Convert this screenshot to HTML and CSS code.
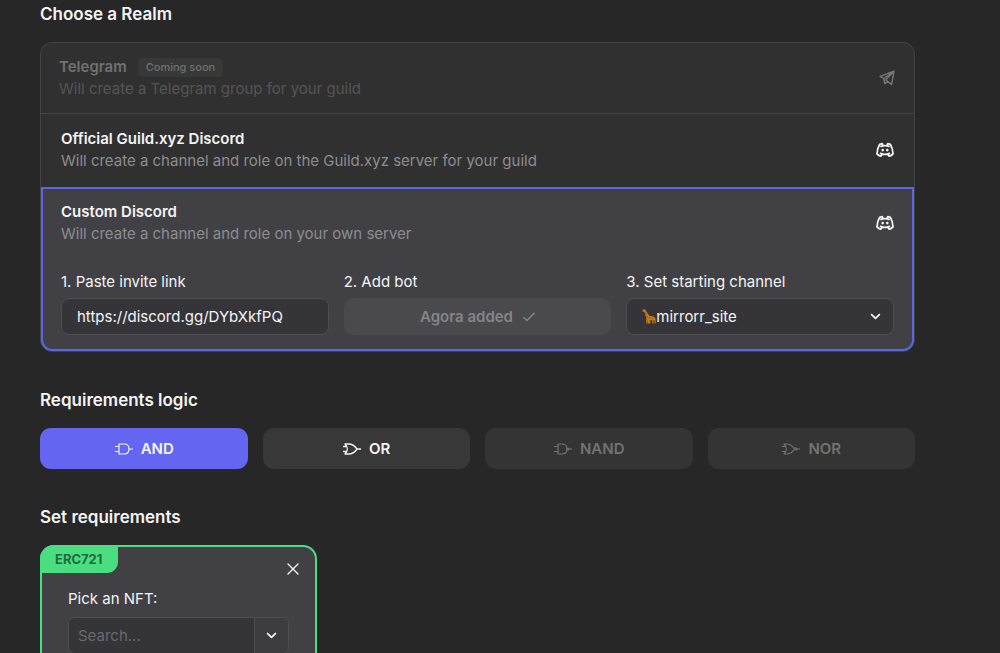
FILE: index.html
```html
<!DOCTYPE html>
<html lang="en">
<head>
<meta charset="utf-8">
<meta name="viewport" content="width=device-width, initial-scale=1">
<title>Create Guild</title>
<link rel="stylesheet" href="styles.css">
</head>
<body>
<svg class="sprite" aria-hidden="true">
  <symbol id="discord" viewBox="0 0 18 16">
    <path d="M6.800 3.400 6.200 1.600 3.600 2.400C2.200 4.500 1.200 7.500 1 11.800c1 1.200 2.300 2 3.800 2.400l1.500-2.300M11.200 3.400l.6-1.800 2.600.8c1.400 2.100 2.400 5.100 2.600 9.400-1 1.200-2.300 2-3.800 2.400l-1.500-2.300M5 4.400c2.600-1 5.400-1 8 0M4.600 11.400c2.800 1.200 6 1.200 8.800 0" fill="none" stroke="currentColor" stroke-width="1.800" stroke-linecap="round" stroke-linejoin="round"/>
    <circle cx="6.700" cy="8.100" r="1.300" fill="currentColor"/><circle cx="11.300" cy="8.100" r="1.300" fill="currentColor"/>
  </symbol>
  <symbol id="chevron" viewBox="0 0 10 10">
    <path d="M1.500 3.200 5 6.700l3.500-3.500" fill="none" stroke="currentColor" stroke-width="1.600" stroke-linecap="round" stroke-linejoin="round"/>
  </symbol>
</svg>
<main class="page">
  <section class="section">
    <h2 class="heading">Choose a Realm</h2>
    <div class="realms">
      <div class="realm realm-disabled">
        <input class="radio" type="radio" name="realm" id="telegram" disabled>
        <label class="realm-head" for="telegram">
          <span class="realm-text">
            <span class="realm-title">Telegram <span class="tag">Coming soon</span></span>
            <span class="realm-desc">Will create a Telegram group for your guild</span>
          </span>
          <svg class="plane" viewBox="0 0 16 16" aria-hidden="true"><path d="M15 1.200 1 6.300l3.700 2.200 1 5.200 2.700-2.500 4.200 3.200L15 1.200 4.700 8.500M15 1.200 6.800 9.700l1.600 1.500" fill="none" stroke="currentColor" stroke-width="1.400" stroke-linejoin="round"/></svg>
        </label>
      </div>
      <div class="realm">
        <input class="radio" type="radio" name="realm" id="official">
        <label class="realm-head" for="official">
          <span class="realm-text">
            <span class="realm-title">Official Guild.xyz Discord</span>
            <span class="realm-desc">Will create a channel and role on the Guild.xyz server for your guild</span>
          </span>
          <svg class="discord" aria-hidden="true"><use href="#discord"/></svg>
        </label>
      </div>
      <div class="realm realm-selected">
        <input class="radio" type="radio" name="realm" id="custom" checked>
        <label class="realm-head" for="custom">
          <span class="realm-text">
            <span class="realm-title">Custom Discord</span>
            <span class="realm-desc">Will create a channel and role on your own server</span>
          </span>
          <svg class="discord" aria-hidden="true"><use href="#discord"/></svg>
        </label>
        <div class="fields">
          <div class="field">
            <label class="label" for="invite">1. Paste invite link</label>
            <input class="control" id="invite" type="text" value="https://discord.gg/DYbXkfPQ">
          </div>
          <div class="field">
            <label class="label" for="bot">2. Add bot</label>
            <button class="bot" id="bot" type="button" disabled>Agora added
              <svg class="check" viewBox="0 0 12 10" aria-hidden="true"><path d="M.8 5.400 4 8.600 11.200 1.200" fill="none" stroke="currentColor" stroke-width="1.400" stroke-linecap="round" stroke-linejoin="round"/></svg>
            </button>
          </div>
          <div class="field">
            <label class="label" for="channel">3. Set starting channel</label>
            <div class="select-wrap">
              <select class="control select" id="channel"><option>mirrorr_site</option></select>
              <svg class="giraffe" viewBox="0 0 14 15" aria-hidden="true"><path d="M.3 1.500 1.800.200 3.400.6l1 2 3 4.200 4.300.8 1.800 1.800.3 5.100h-1.200l-.4-3.600-.9.300.3 3.300h-1.300l-.4-3.400-1.500-.1-.2 3.500H6l-.2-3.800-.4 3.800H4.100l.2-5.900L2.400 3 .5 2.600z" fill="#c27a1c"/><path d="M3 3.500 4.600 5.200M5 7.200l1.200 1M7.500 8.200l1 1M10 8.600l1 1" stroke="#714413" stroke-width=".7"/></svg>
              <svg class="chevron select-arrow" aria-hidden="true"><use href="#chevron"/></svg>
            </div>
          </div>
        </div>
      </div>
    </div>
  </section>

  <section class="section">
    <h2 class="heading">Requirements logic</h2>
    <div class="logic">
      <button class="gate gate-active" type="button">
        <svg class="gate-icon" viewBox="0 0 20 12" aria-hidden="true"><path d="M5 1h5c3 0 5 2 5 5s-2 5-5 5H5zM1 3.500h4M1 8.500h4M15 6h4"/></svg>AND
      </button>
      <button class="gate" type="button">
        <svg class="gate-icon gate-icon-bold" viewBox="0 0 20 12" aria-hidden="true"><path d="M3 1h3.500c4 0 6.500 2 8.500 5-2 3-4.500 5-8.500 5H3c3-3 3-7 0-10zM1 3.500h4M1 8.500h4M15 6h4"/></svg>OR
      </button>
      <button class="gate" type="button" disabled>
        <svg class="gate-icon" viewBox="0 0 20 12" aria-hidden="true"><path d="M5 1h4c3 0 5 2 5 5s-2 5-5 5H5zM1 3.500h4M1 8.500h4M16 6h3"/><circle cx="15" cy="6" r="1"/></svg>NAND
      </button>
      <button class="gate" type="button" disabled>
        <svg class="gate-icon" viewBox="0 0 20 12" aria-hidden="true"><path d="M3 1h3c3.500 0 5.500 2 7.500 5-2 3-4 5-7.500 5H3c3-3 3-7 0-10zM1 3.500h4M1 8.500h4M16 6h3"/><circle cx="14.700" cy="6" r="1.200"/></svg>NOR
      </button>
    </div>
  </section>

  <section class="section">
    <h2 class="heading">Set requirements</h2>
    <div class="requirements">
      <div class="card">
        <span class="badge">ERC721</span>
        <button class="close" type="button" aria-label="Remove"><svg class="close-icon" viewBox="0 0 12 12" aria-hidden="true"><path d="m1 1 10 10M11 1 1 11" fill="none" stroke="currentColor" stroke-width="1.400" stroke-linecap="round"/></svg></button>
        <label class="label" for="nft">Pick an NFT:</label>
        <div class="combo">
          <input class="combo-input" id="nft" type="text" placeholder="Search...">
          <button class="combo-button" type="button" aria-label="Show options"><svg class="chevron" aria-hidden="true"><use href="#chevron"/></svg></button>
        </div>
      </div>
    </div>
  </section>
</main>
</body>
</html>
```
FILE: styles.css
```css
* { box-sizing: border-box; }
html { background: #272727; scrollbar-width: none; }
body {
  margin: 0;
  color: #f4f4f5;
  font: 15px/22px Inter, "Liberation Sans", sans-serif;
}
button, input, select { font: inherit; color: inherit; margin: 0; }
.sprite { position: absolute; width: 0; height: 0; }
.page {
  display: flex;
  flex-direction: column;
  gap: 36px;
  padding: 2px 85px 0 40px;
}
.heading { margin: 0 0 16px; font-size: 17px; line-height: 24px; font-weight: 600; }

.realms {
  border: 1px solid #434344;
  border-radius: 12px;
  background: #303030;
}
.realm { position: relative; padding: 14px 20px 15px; }
.radio { position: absolute; opacity: 0; }
.realm-head { display: flex; align-items: center; justify-content: space-between; }
.realm-text { display: flex; flex-direction: column; }
.realm-title { display: flex; align-items: center; gap: 11px; font-weight: 600; }
.realm-desc { color: #8d8d90; }
.discord { width: 18px; height: 16px; }
.plane { width: 16px; height: 16px; color: #777; }
.realm-disabled { padding: 13px 19px 13px 18px; border-bottom: 1px solid #434344; }
.realm-disabled .realm-title { color: #707071; }
.realm-disabled .realm-desc { color: #555556; }
.tag {
  padding: 0 8px;
  border-radius: 5px;
  background: #383838;
  color: #707071;
  font-size: 11px;
  line-height: 19px;
  font-weight: 500;
}
.realm-selected {
  padding: 12px 18px 14px;
  border: 2px solid #5966e6;
  border-radius: 0 0 11px 11px;
  background: #404045;
}
.fields { display: grid; grid-template-columns: repeat(3, minmax(0, 1fr)); gap: 15px; margin-top: 26px; }
.field { display: flex; flex-direction: column; gap: 5px; }
.label { display: block; }
.control {
  width: 100%;
  height: 37px;
  padding: 0 15px;
  border: 1px solid #4d4d52;
  border-radius: 8px;
  background: #353439;
}
.bot {
  display: flex;
  align-items: center;
  justify-content: center;
  gap: 10px;
  height: 37px;
  border: 0;
  border-radius: 10px;
  background: #4a4a4e;
  color: #858589;
  font-weight: 600;
}
.check { width: 12px; height: 10px; }
.select-wrap { position: relative; }
.select { display: block; appearance: none; padding-left: 29px; }
.giraffe { position: absolute; left: 16px; top: 11px; width: 14px; height: 15px; pointer-events: none; }
.chevron { display: block; width: 11px; height: 11px; }
.select-arrow { position: absolute; right: 13px; top: 13px; pointer-events: none; }

.logic { display: grid; grid-template-columns: repeat(4, minmax(0, 1fr)); gap: 15px; }
.gate {
  display: flex;
  align-items: center;
  justify-content: center;
  gap: 7px;
  height: 41px;
  border: 0;
  border-radius: 11px;
  background: #383838;
  font-weight: 600;
}
.gate:disabled { background: #343434; color: #727272; }
.gate-active { background: #6466f1; }
.gate-icon { width: 20px; height: 12px; fill: none; stroke: currentColor; stroke-width: 1.2; stroke-linejoin: round; }
.gate-icon-bold { stroke-width: 1.4; }

.requirements { display: grid; grid-template-columns: repeat(3, minmax(0, 1fr)); gap: 22px; }
.card {
  position: relative;
  padding: 41px 26px 26px;
  border: 2px solid #4ade80;
  border-radius: 14px;
  background: #404045;
}
.badge {
  position: absolute;
  left: -2px;
  top: -2px;
  padding: 0 16px 0 15px;
  border-radius: 14px 0 11px 0;
  background: #4ade80;
  color: #216a40;
  font-size: 13px;
  line-height: 28px;
  font-weight: 700;
}
.close { position: absolute; top: 11px; right: 11px; padding: 5px; border: 0; background: none; }
.close-icon { display: block; width: 12px; height: 12px; }
.combo {
  display: flex;
  height: 37px;
  margin-top: 7px;
  border: 1px solid #4d4d52;
  border-radius: 7px;
  background: #353439;
  overflow: hidden;
}
.combo-input { flex: 1; min-width: 0; padding: 0 9px; border: 0; background: none; }
.combo-input::placeholder { color: #69696d; opacity: 1; }
.combo-button { width: 34px; padding: 0 11px; border: 0; border-left: 1px solid #4d4d52; background: #3b3b40; }
```
